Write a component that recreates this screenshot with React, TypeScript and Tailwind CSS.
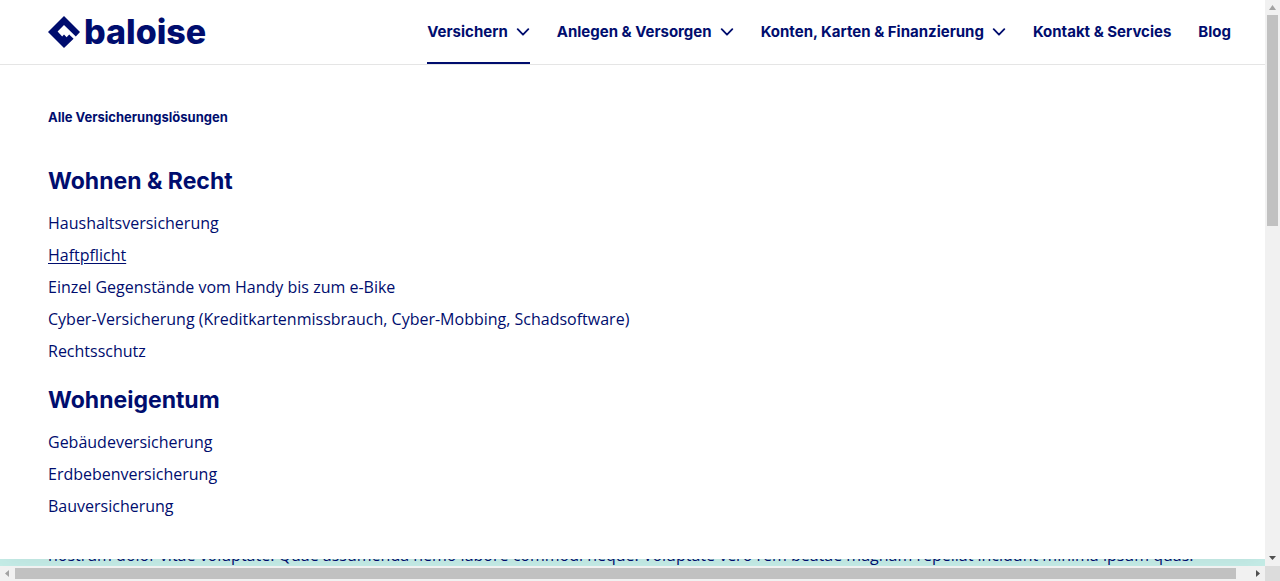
import React from 'react';

type NavItem = { label: string; menu: boolean; active?: boolean };
type Group = { title: string; links: { label: string; current?: boolean }[] };

const navItems: NavItem[] = [
  { label: 'Versichern', menu: true, active: true },
  { label: 'Anlegen & Versorgen', menu: true },
  { label: 'Konten, Karten & Finanzierung', menu: true },
  { label: 'Kontakt & Servcies', menu: false },
  { label: 'Blog', menu: false },
];

const groups: Group[] = [
  {
    title: 'Wohnen & Recht',
    links: [
      { label: 'Haushaltsversicherung' },
      { label: 'Haftpflicht', current: true },
      { label: 'Einzel Gegenstände vom Handy bis zum e-Bike' },
      { label: 'Cyber-Versicherung (Kreditkartenmissbrauch, Cyber-Mobbing, Schadsoftware)' },
      { label: 'Rechtsschutz' },
    ],
  },
  {
    title: 'Wohneigentum',
    links: [
      { label: 'Gebäudeversicherung' },
      { label: 'Erdbebenversicherung' },
      { label: 'Bauversicherung' },
    ],
  },
];

function Logo() {
  return (
    <a href="#start" className="flex h-8 items-center gap-1 text-[34px] leading-8 font-extrabold">
      <svg viewBox="0 0 32 32" className="size-8" fill="currentColor" aria-hidden="true">
        <path d="M16 0 32 16 27.8 20.4 16 9 9.6 15.6 14.2 20.4 16 18.6 18.6 21.2 21.2 18.6 25.6 22.8 16 32 0 16Z" />
      </svg>
      baloise
    </a>
  );
}

function Chevron() {
  return (
    <svg viewBox="0 0 14 8" className="h-2 w-3.5" fill="none" stroke="currentColor" strokeWidth="1.8" strokeLinecap="round" strokeLinejoin="round" aria-hidden="true">
      <path d="M1.7 1.2 7 6.7 12.3 1.2" />
    </svg>
  );
}

function Header() {
  return (
    <header className="relative z-20 flex h-[65px] shrink-0 justify-between border-b border-[#e5e5e5] bg-white pr-[34px] pl-12 font-['Inter',sans-serif]">
      <div className="flex items-center">
        <Logo />
      </div>
      <nav className="flex gap-[27px] text-[15px] font-bold">
        {navItems.map((item) =>
          item.menu ? (
            <button
              key={item.label}
              type="button"
              aria-expanded={!!item.active}
              className={`flex items-center gap-2 border-b-2 pt-0.5 whitespace-nowrap ${item.active ? 'border-[#000d6e]' : 'border-transparent'}`}
            >
              {item.label}
              <Chevron />
            </button>
          ) : (
            <a key={item.label} href="#seite" className="flex items-center whitespace-nowrap">
              {item.label}
            </a>
          ),
        )}
      </nav>
    </header>
  );
}

function MenuPanel() {
  return (
    <section className="relative z-10 shrink-0 bg-white px-12 pt-10 pb-[41px] shadow-[0_0_30px_rgba(0,7,57,0.08)]">
      <a href="#alle" className="block font-['Inter',sans-serif] text-[13px] leading-6 font-bold">
        Alle Versicherungslösungen
      </a>
      <div className="mt-9 flex flex-col gap-[21px]">
        {groups.map((group) => (
          <div key={group.title}>
            <h2 className="font-['Inter',sans-serif] text-[23px] leading-8 font-bold">{group.title}</h2>
            <ul className="mt-3.5 flex flex-col gap-2">
              {group.links.map((link) => (
                <li key={link.label} className="leading-6">
                  <a href="#produkt" className={link.current ? 'underline underline-offset-2' : ''}>
                    {link.label}
                  </a>
                </li>
              ))}
            </ul>
          </div>
        ))}
      </div>
    </section>
  );
}

function Arrow({ points, active }: { points: string; active?: boolean }) {
  return (
    <svg viewBox="0 0 15 15" className={`size-[15px] shrink-0 ${active ? 'fill-[#505050]' : 'fill-[#a3a3a3]'}`} aria-hidden="true">
      <polygon points={points} />
    </svg>
  );
}

export default function App() {
  return (
    <div className="grid h-screen grid-cols-[minmax(0,1fr)_15px] grid-rows-[minmax(0,1fr)_15px] overflow-hidden bg-[#f1f1f1] font-['Open_Sans',sans-serif] text-base text-[#000d6e]">
      <div className="flex flex-col overflow-hidden bg-[#c6eee8]">
        <Header />
        <MenuPanel />
        <main className="px-12">
          <p className="-mt-4 leading-6 whitespace-nowrap">
            nostrum dolor vitae voluptate. Quae assumenda nemo labore commodi neque. Voluptate vero rem beatae magnam repellat incidunt minima ipsum quas.
          </p>
        </main>
      </div>
      <div className="flex flex-col items-center">
        <Arrow points="7.5,5 11,10 4,10" />
        <div className="flex w-full flex-1 flex-col px-0.5">
          <div className="h-[39.4%] bg-[#c1c1c1]" />
        </div>
        <Arrow points="4,5 11,5 7.5,9" active />
      </div>
      <div className="flex items-center">
        <Arrow points="5,7.5 9,4 9,11" />
        <div className="flex h-full flex-1 py-0.5">
          <div className="w-[98.9%] bg-[#c1c1c1]" />
        </div>
        <Arrow points="6,4 10,7.5 6,11" active />
      </div>
      <div className="bg-[#dcdcdc]" />
    </div>
  );
}
